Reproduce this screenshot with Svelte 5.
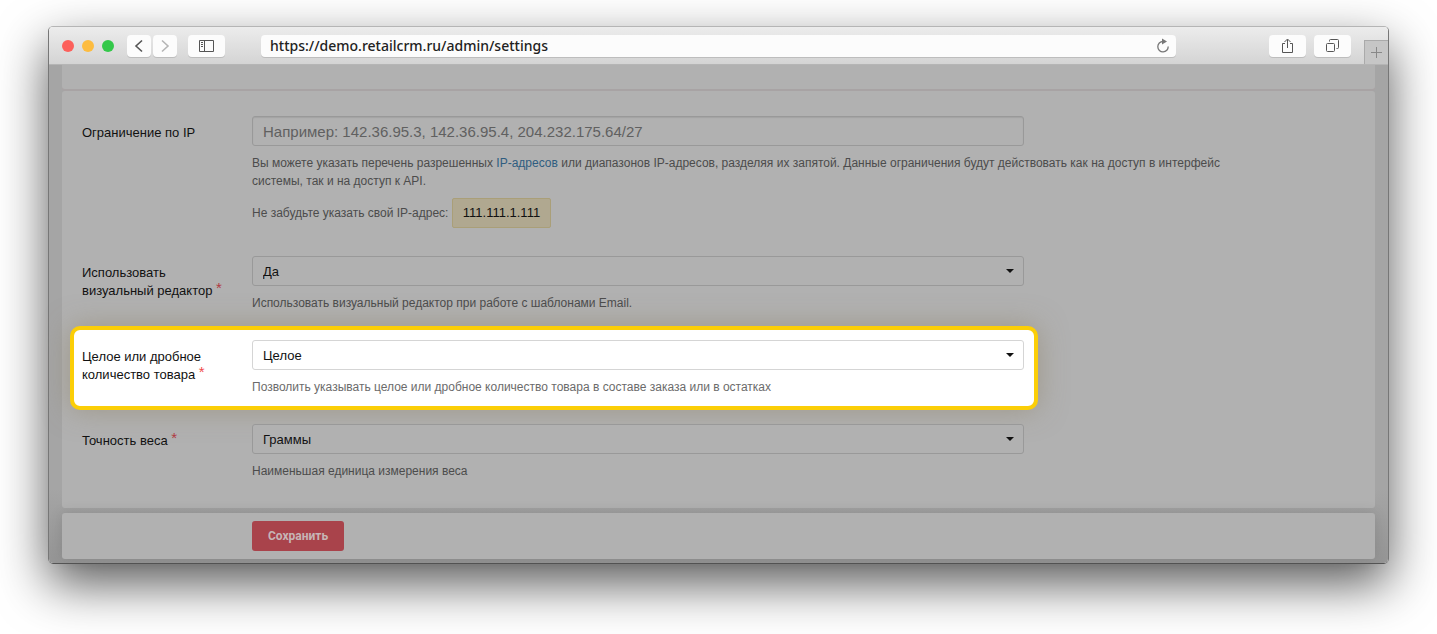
<script lang="ts">
	type Setting = {
		id: string;
		label: string;
		value: string;
		options: string[];
		help: string;
		highlighted?: boolean;
	};

	let address = $state('https://demo.retailcrm.ru/admin/settings');
	let allowedIps = $state('');

	const settings: Setting[] = $state([
		{
			id: 'visual-editor',
			label: 'Использовать визуальный редактор',
			value: 'Да',
			options: ['Да', 'Нет'],
			help: 'Использовать визуальный редактор при работе с шаблонами Email.'
		},
		{
			id: 'quantity-type',
			label: 'Целое или дробное количество товара',
			value: 'Целое',
			options: ['Целое', 'Дробное'],
			help: 'Позволить указывать целое или дробное количество товара в составе заказа или в остатках',
			highlighted: true
		},
		{
			id: 'weight-precision',
			label: 'Точность веса',
			value: 'Граммы',
			options: ['Граммы', 'Килограммы'],
			help: 'Наименьшая единица измерения веса'
		}
	]);
</script>

<div class="window">
	<header class="toolbar">
		<div class="lights">
			<span class="light red"></span>
			<span class="light yellow"></span>
			<span class="light green"></span>
		</div>
		<div class="history">
			<button class="tool narrow" aria-label="Назад">
				<svg width="10" height="14" viewBox="0 0 10 14"><path d="M8 1.500 2 7l6 5.500" /></svg>
			</button>
			<button class="tool narrow muted" aria-label="Вперёд">
				<svg width="10" height="14" viewBox="0 0 10 14"><path d="M2 1.500 8 7l-6 5.500" /></svg>
			</button>
		</div>
		<button class="tool" aria-label="Боковая панель">
			<svg class="thin" width="16" height="12" viewBox="0 0 16 12">
				<path d="M.5.5h14v11H.5zM5.500.5v11M2 2.500h2M2 4.500h2M2 6.500h2" />
			</svg>
		</button>
		<div class="address">
			<input type="text" aria-label="Адрес" bind:value={address} />
			<button class="reload" aria-label="Обновить">
				<svg width="14" height="16" viewBox="0 0 14 16">
					<path d="M7.500 3.500H7a5.200 5.200 0 1 0 5.200 5" />
					<path class="solid" d="M6 .5v6l5-3z" />
				</svg>
			</button>
		</div>
		<div class="actions">
			<button class="tool" aria-label="Поделиться">
				<svg class="thin" width="13" height="16" viewBox="0 0 13 16">
					<path d="M4 5.500H1.500v9h10v-9H9M6.500 10V1.500M3.500 4l3-3 3 3" />
				</svg>
			</button>
			<button class="tool" aria-label="Вкладки">
				<svg class="thin" width="13" height="13" viewBox="0 0 13 13">
					<rect x=".5" y="4.500" width="8" height="8" rx="1" />
					<path d="M3.500 2.500v-1a1 1 0 0 1 1-1h7a1 1 0 0 1 1 1v7a1 1 0 0 1-1 1h-1" />
				</svg>
			</button>
		</div>
		<button class="new-tab" aria-label="Новая вкладка">
			<svg class="thin" width="11" height="11" viewBox="0 0 11 11"><path d="M5.500 0v11M0 5.500h11" /></svg>
		</button>
	</header>

	<form class="page" onsubmit={(e) => e.preventDefault()}>
		<section class="panel previous"></section>

		<section class="panel settings">
			<div class="row wide">
				<label class="label" for="allowed-ips">Ограничение по IP</label>
				<div class="field">
					<input
						class="control"
						id="allowed-ips"
						type="text"
						placeholder="Например: 142.36.95.3, 142.36.95.4, 204.232.175.64/27"
						bind:value={allowedIps}
					/>
					<p class="help">
						Вы можете указать перечень разрешенных <a href="#ip">IP-адресов</a> или диапазонов IP-адресов,
						разделяя их запятой. Данные ограничения будут действовать как на доступ в интерфейс системы,
						так и на доступ к API.
					</p>
					<p class="own-ip">Не забудьте указать свой IP-адрес: <span class="ip">111.111.1.111</span></p>
				</div>
			</div>

			{#each settings as setting (setting.id)}
				<div class="row" class:highlighted={setting.highlighted}>
					<label class="label" for={setting.id}>
						{setting.label} <span class="required">*</span>
					</label>
					<div class="field">
						<div class="select">
							<select class="control" id={setting.id} bind:value={setting.value}>
								{#each setting.options as option}
									<option value={option}>{option}</option>
								{/each}
							</select>
							<span class="caret"></span>
						</div>
						<p class="help">{setting.help}</p>
					</div>
				</div>
			{/each}
		</section>

		<footer class="panel footer">
			<button class="save" type="submit">Сохранить</button>
		</footer>
	</form>
</div>

<style>
	:global(body) {
		margin: 0;
		background: #fff;
	}

	.window {
		margin: 26px 48px 70px;
		border: 1px solid #777;
		border-top-color: #b5b5b5;
		border-bottom-color: #555;
		border-radius: 5px;
		font-family: 'Liberation Sans', Arial, sans-serif;
		font-size: 13px;
		line-height: 18px;
		box-shadow: 0 20px 50px rgba(0, 0, 0, 0.65);
	}

	button,
	input,
	select {
		font-family: inherit;
		box-sizing: border-box;
	}

	/* Browser chrome */
	.toolbar {
		display: flex;
		align-items: center;
		height: 37px;
		padding-left: 13px;
		background: linear-gradient(#ececec, #d4d4d4);
		border-bottom: 1px solid #b5b5b5;
		border-radius: 4px 4px 0 0;
	}

	.lights {
		display: flex;
		gap: 8px;
	}

	.light {
		width: 12px;
		height: 12px;
		border-radius: 50%;
	}

	.red {
		background: #fc605b;
	}

	.yellow {
		background: #fdbc40;
	}

	.green {
		background: #34c84a;
	}

	.history {
		display: flex;
		gap: 2px;
		margin: 0 11px 0 13px;
	}

	.tool {
		display: flex;
		align-items: center;
		justify-content: center;
		width: 37px;
		height: 22px;
		padding: 0;
		border: 0;
		border-radius: 4px;
		background: #fcfcfc;
		box-shadow: 0 1px 0 #bdbdbd;
	}

	.narrow {
		width: 24px;
	}

	svg {
		fill: none;
		stroke: #555;
		stroke-width: 1.6;
	}

	.muted svg {
		stroke: #b5b5b5;
	}

	svg.thin {
		stroke-width: 1;
	}

	.address {
		display: flex;
		flex: 1;
		align-items: center;
		height: 22px;
		margin: 0 93px 0 36px;
		border-radius: 4px;
		background: #fcfcfc;
		box-shadow: 0 1px 0 #bdbdbd;
	}

	.address input {
		flex: 1;
		height: 22px;
		padding: 0 9px;
		border: 0;
		outline: 0;
		background: none;
		color: #222;
		font-family: 'Noto Sans', sans-serif;
		font-size: 14px;
		font-weight: 500;
	}

	.reload {
		display: flex;
		padding: 0 6px;
		border: 0;
		background: none;
	}

	.reload svg {
		stroke: #777;
		stroke-width: 1.3;
	}

	.reload .solid {
		fill: #777;
		stroke: none;
	}

	.actions {
		display: flex;
		gap: 8px;
	}

	.new-tab {
		display: flex;
		align-items: center;
		justify-content: center;
		align-self: flex-end;
		width: 24px;
		height: 24px;
		margin-left: 13px;
		padding: 0;
		border: 1px solid #aaa;
		border-width: 1px 0 0 1px;
		background: #c6c6c6;
	}

	.new-tab svg {
		stroke: #888;
	}

	/* Dimmed settings page */
	.page {
		padding: 0 13px 4px;
		border-radius: 0 0 4px 4px;
		background: linear-gradient(#a5a5a5 85%, #959595);
	}

	.panel {
		border-radius: 3px;
		background: #b1b1b1;
	}

	.previous {
		height: 24px;
		margin-bottom: 2px;
		border-radius: 0 0 3px 3px;
		box-shadow: 0 2px 0 #a8a3a4;
	}

	.settings {
		padding: 11px 20px 14px;
		margin-bottom: 5px;
	}

	.row {
		display: grid;
		grid-template-columns: 170px 1fr;
		box-sizing: border-box;
		max-width: 942px;
		min-height: 84px;
		padding-top: 14px;
	}

	.wide {
		max-width: 1150px;
		min-height: 140px;
	}

	.label {
		padding: 8px 24px 0 0;
		color: #111;
	}

	.required {
		color: #b03a42;
		font-size: 15px;
		line-height: 0;
		vertical-align: 2px;
	}

	.control {
		display: block;
		width: 100%;
		max-width: 772px;
		height: 30px;
		padding: 0 10px;
		border: 1px solid #999;
		border-radius: 3px;
		outline: 0;
		background: #b1b1b1;
		color: #111;
		font-size: 13px;
	}

	input.control {
		font-size: 15px;
		box-shadow: inset 0 1px 1px #a3a3a3;
	}

	.control::placeholder {
		color: #606060;
		opacity: 1;
	}

	.select {
		position: relative;
	}

	select.control {
		appearance: none;
	}

	.caret {
		position: absolute;
		top: 13px;
		right: 10px;
		border: 4px solid transparent;
		border-top-color: #111;
		border-bottom: 0;
		pointer-events: none;
	}

	.help,
	.own-ip {
		margin: 0;
		padding-top: 8px;
		color: #4c4c4c;
		font-size: 12px;
	}

	.help a {
		color: #2f5d80;
		text-decoration: none;
	}

	.ip {
		display: inline-block;
		padding: 5px 10px;
		border: 1px solid #aa9f78;
		border-radius: 2px;
		background: #b0a890;
		color: #111;
		font-size: 13px;
	}

	.highlighted {
		box-sizing: content-box;
		min-height: 66px;
		margin: 0 -12px;
		padding: 10px 10px 0 8px;
		border: 4px solid #fbce07;
		border-radius: 10px;
		background: #fff;
		box-shadow: 0 0 28px rgba(140, 125, 95, 0.5);
	}

	.highlighted .control {
		border-color: #d5d5d5;
		background: #fff;
	}

	.highlighted .help {
		color: #6b6b6b;
	}

	.highlighted .required {
		color: #f04b4b;
	}

	.footer {
		padding: 8px 20px 8px 190px;
		box-shadow: 0 0 14px rgba(0, 0, 0, 0.12);
	}

	.save {
		display: block;
		height: 30px;
		padding: 0 16px;
		border: 0;
		border-radius: 3px;
		background: #a9434b;
		color: #c6b5b6;
		font-family: Roboto, sans-serif;
		font-size: 12px;
		font-weight: bold;
	}
</style>
